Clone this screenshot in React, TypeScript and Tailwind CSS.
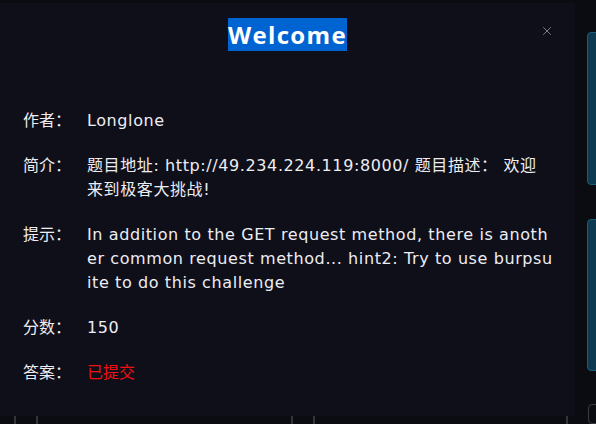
import { X } from "lucide-react";

const rows = [
  { label: "作者：", value: "Longlone" },
  { label: "简介：", value: "题目地址: http://49.234.224.119:8000/ 题目描述： 欢迎来到极客大挑战!" },
  {
    label: "提示：",
    value:
      "In addition to the GET request method, there is another common request method... hint2: Try to use burpsuite to do this challenge",
  },
  { label: "分数：", value: "150" },
  { label: "答案：", value: "已提交", red: true },
];

const App = () => {
  return (
    <div
      className="relative h-[424px] w-[596px] overflow-hidden bg-[#0b0b12]"
      style={{ fontFamily: '"DejaVu Sans", "Noto Sans CJK SC", sans-serif' }}
    >
      {/* page behind the dialog */}
      <div className="flex h-full">
        <div className="flex w-[587px] shrink-0 flex-col justify-end">
          <div className="flex h-[8px] pl-[14px]">
            <div className="w-[24px] border-x-2 border-[#34343e]" />
            <div className="ml-[253px] w-[24px] border-x-2 border-[#34343e]" />
            <div className="ml-[251px] w-[2px] bg-[#34343e]" />
          </div>
        </div>
        <div className="flex shrink-0 flex-col gap-[34px] pt-[32px]">
          <div className="h-[156px] w-[21px] rounded-[4px] border border-[#1d5b76] bg-[#0d3a51]" />
          <div className="h-[156px] w-[21px] rounded-[4px] border border-[#1d5b76] bg-[#0d3a51]" />
          <div className="ml-px mt-[-1px] h-[20px] w-[21px] rounded-[4px] border border-[#3b3b46]" />
        </div>
      </div>

      {/* dialog */}
      <div className="absolute left-0 top-[3px] h-[413px] w-[575px] bg-[#0f0f1a]">
        <div className="relative flex h-[72px] justify-center pt-[12px]">
          <h2
            className="text-[24px] font-bold leading-[39px] tracking-[1.3px] text-white"
            style={{ fontFamily: '"Open Sans", sans-serif' }}
          >
            <span className="bg-[#0063d2]">Welcome</span>
          </h2>
          <button className="absolute right-[21px] top-[21px] text-[#8c8c96]">
            <X size={14} strokeWidth={1.5} />
          </button>
        </div>

        <div className="mt-[34px] flex flex-col gap-[21px] text-[16px] leading-[24px] tracking-[0.6px] text-[#ededf2]">
          {rows.map((r) => (
            <div key={r.label} className="flex">
              <div className="ml-[23px] w-[64px] shrink-0 tracking-normal">{r.label}</div>
              <div className={`w-[466px] break-all ${r.red ? "text-[#f01010] tracking-normal" : ""}`}>{r.value}</div>
            </div>
          ))}
        </div>
      </div>
    </div>
  );
};

export default App;
